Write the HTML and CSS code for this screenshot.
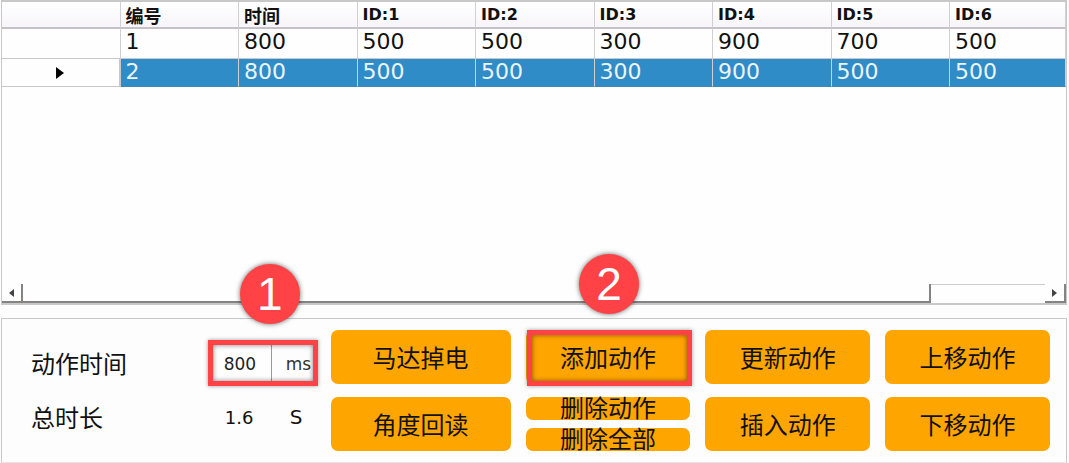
FILE: index.html
```html
<!DOCTYPE html>
<html lang="zh-CN">
<head>
<meta charset="utf-8">
<meta name="viewport" content="width=device-width, initial-scale=1">
<title>动作编辑</title>
<link rel="stylesheet" href="styles.css">
</head>
<body>
<main class="editor">
  <section class="list">
    <table class="actions">
      <thead>
        <tr><th></th><th class="han">编号</th><th class="han">时间</th><th>ID:1</th><th>ID:2</th><th>ID:3</th><th>ID:4</th><th>ID:5</th><th class="last">ID:6</th></tr>
      </thead>
      <tbody>
        <tr><td></td><td>1</td><td>800</td><td>500</td><td>500</td><td>300</td><td>900</td><td>700</td><td>500</td></tr>
        <tr class="selected"><td class="marker"><svg width="8" height="12" viewBox="0 0 8 12" aria-hidden="true"><path d="M0 0L8 6L0 12Z"/></svg></td><td>2</td><td>800</td><td>500</td><td>500</td><td>300</td><td>900</td><td>500</td><td>500</td></tr>
      </tbody>
    </table>
    <div class="scrollbar">
      <button class="arrow arrow-left" type="button" aria-label="向左滚动"><svg width="5" height="8" viewBox="0 0 5 8"><path d="M5 0L0 4L5 8Z"/></svg></button>
      <div class="thumb"></div>
      <div class="track"></div>
      <button class="arrow arrow-right" type="button" aria-label="向右滚动"><svg width="5" height="8" viewBox="0 0 5 8"><path d="M0 0L5 4L0 8Z"/></svg></button>
    </div>
  </section>

  <section class="panel">
    <div class="form">
      <div class="field">
        <label for="duration">动作时间</label>
        <div class="values marked">
          <input id="duration" class="duration" type="text" value="800">
          <span class="unit">ms</span>
          <span class="frame"></span>
          <span class="badge badge-one">1</span>
        </div>
      </div>
      <div class="field">
        <label for="total">总时长</label>
        <div class="values">
          <output id="total" class="total">1.6</output>
          <span class="seconds">S</span>
        </div>
      </div>
    </div>
    <div class="column">
      <button class="btn" type="button">马达掉电</button>
      <button class="btn" type="button">角度回读</button>
    </div>
    <div class="column">
      <div class="marked add">
        <button class="btn" type="button">添加动作</button>
        <span class="frame"></span>
        <span class="badge">2</span>
      </div>
      <div class="pair">
        <button class="btn small" type="button">删除动作</button>
        <button class="btn small" type="button">删除全部</button>
      </div>
    </div>
    <div class="column">
      <button class="btn" type="button">更新动作</button>
      <button class="btn" type="button">插入动作</button>
    </div>
    <div class="column">
      <button class="btn" type="button">上移动作</button>
      <button class="btn" type="button">下移动作</button>
    </div>
  </section>
</main>
</body>
</html>
```

FILE: styles.css
```css
* {
  box-sizing: border-box;
}

body {
  margin: 0;
  background: #fdfdfd;
  color: #111;
  font-family: "DejaVu Sans", "Noto Sans CJK SC", sans-serif;
}

.editor {
  display: flex;
  flex-direction: column;
  gap: 13px;
  min-height: 100vh;
  padding: 0 2px 0 1px;
}

.list {
  flex: 1;
  display: flex;
  flex-direction: column;
  justify-content: space-between;
  border: 1px solid #c8c8c8;
  border-width: 2px 1px;
  background: #fefefe;
}

.actions {
  width: 100%;
  table-layout: fixed;
  border-collapse: separate;
  border-spacing: 0;
}

.actions th,
.actions td {
  overflow: hidden;
  padding: 0 5px;
  border-right: 1px solid #d2cfd4;
  text-align: left;
  white-space: nowrap;
}

.actions th {
  height: 27px;
  padding-top: 1px;
  border-bottom: 2px solid #c4c2c6;
  background: linear-gradient(#fff, #f7f5f9);
  font-size: 16px;
  line-height: 24px;
}

.actions .last {
  width: 116px;
}

.actions .han {
  font-family: "Noto Sans CJK SC", sans-serif;
  font-size: 18px;
}

.actions td {
  height: 30px;
  padding-bottom: 4px;
  border-bottom: 1px solid #c9c7cb;
  font-size: 22px;
  line-height: 25px;
}

.actions .selected td {
  height: 28px;
  padding-bottom: 2px;
  border-bottom-color: #3f86b0;
  background: #308cc6;
  color: #eaf5fc;
}

.actions .selected .marker {
  padding: 0;
  border: 1px solid #c9c7cb;
  border-width: 0 2px 1px 0;
  background: #fefefe;
  color: #000;
  text-align: center;
}

.marker svg {
  display: block;
  margin: 0 auto;
}

.scrollbar {
  display: flex;
  height: 19px;
}

.arrow {
  display: flex;
  align-items: center;
  justify-content: center;
  flex: none;
  width: 21px;
  padding: 0;
  border: 0 solid #858282;
  border-width: 0 2px 2px 0;
  background: #fefefe;
}

.arrow svg {
  fill: #444;
}

.thumb {
  flex: 907;
  border: 0 solid #858282;
  border-width: 0 2px 2px 0;
}

.track {
  flex: 114;
  border-top: 1px solid #ccc;
}

.panel {
  display: grid;
  grid-template-columns: 285fr 180fr 165fr 165fr 165fr;
  gap: 15px;
  padding: 11px 16px 11px 29px;
  border: 1px solid #c8c8c8;
  border-bottom-color: #e6e6e6;
}

.column {
  display: grid;
  grid-template-rows: 54px 54px;
  gap: 13px;
}

.form {
  display: grid;
  grid-template-rows: 46px 46px;
  gap: 8px;
  padding-top: 10px;
}

.field {
  display: flex;
  align-items: center;
  justify-content: space-between;
}

.field label {
  font-family: "Noto Sans CJK SC", sans-serif;
  font-size: 24px;
  line-height: 46px;
}

.values {
  display: flex;
  align-items: center;
  width: 108px;
  height: 46px;
}

.duration {
  width: 64px;
  height: 36px;
  padding: 2px 0 0 16px;
  border: 0;
  border-right: 1px solid #999;
  background: #fefefe;
  color: #222;
  font: 17px "DejaVu Sans", sans-serif;
}

.unit {
  padding: 2px 0 0 14px;
  color: #333;
  font-size: 17px;
}

.total {
  width: 64px;
  padding-left: 17px;
  font-size: 18px;
}

.seconds {
  padding-left: 18px;
  font-size: 20px;
}

.btn {
  width: 100%;
  height: 100%;
  padding: 0;
  border: 0;
  border-radius: 7px;
  background: #ffa500;
  color: #111;
  font-family: "Noto Sans CJK SC", sans-serif;
  font-size: 24px;
  line-height: 24px;
}

.pair {
  display: grid;
  grid-template-rows: 23px 23px;
  gap: 8px;
}

.small {
  font-family: "DejaVu Sans", "Noto Sans CJK SC", sans-serif;
  line-height: 22px;
}

/* Numbered callouts drawn over the controls */
.marked {
  position: relative;
}

.frame {
  position: absolute;
  inset: 0 -2px 0 0;
  border: 5px solid #ff4245;
  box-shadow: 0 0 4px rgba(0, 0, 0, 0.4), inset 0 0 5px rgba(0, 0, 0, 0.5);
  pointer-events: none;
}

.add .frame {
  inset: 0 -2px -2px 1px;
}

.badge {
  position: absolute;
  bottom: calc(100% + 16px);
  left: calc(50% - 29px);
  width: 60px;
  height: 60px;
  border-radius: 50%;
  background: #ff4245;
  box-shadow: 0 0 5px rgba(0, 0, 0, 0.6);
  color: #fff;
  font: 46px/60px "Liberation Sans", sans-serif;
  text-align: center;
}

.badge-one {
  left: calc(50% - 22px);
}
```
